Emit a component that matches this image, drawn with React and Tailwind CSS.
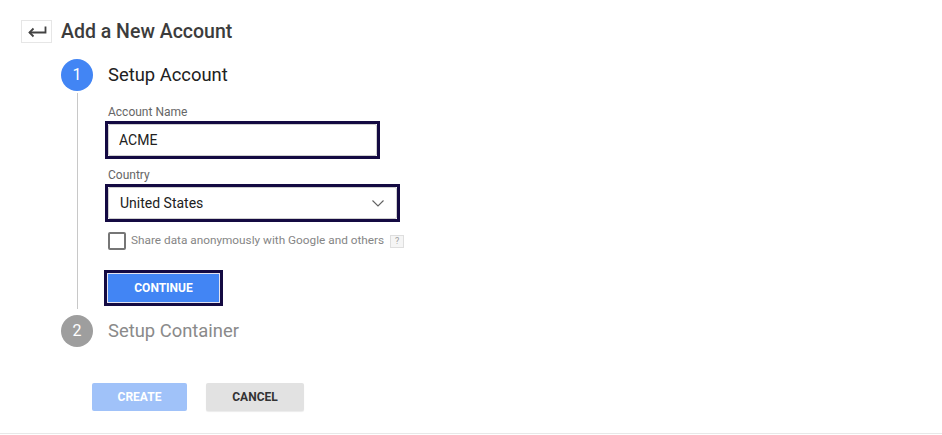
import { useState } from 'react'

function BackArrow() {
  return (
    <svg width="20" height="12" viewBox="0 0 20 12" fill="none" stroke="#424242" strokeWidth="1.8">
      <path d="M18.5 0.5 V6.5 H2.5" />
      <path d="M6.5 2.5 L2.5 6.5 L6.5 10.5" />
    </svg>
  )
}

function Chevron() {
  return (
    <svg width="12" height="7" viewBox="0 0 12 7" fill="none" stroke="#616161" strokeWidth="1.1">
      <path d="M0.5 0.5 L6 6 L11.5 0.5" />
    </svg>
  )
}

function Focus({ className = '', children }) {
  return <div className={`border-[3px] border-[#140a42] ${className}`}>{children}</div>
}

export default function App() {
  const [name, setName] = useState('ACME')
  const [share, setShare] = useState(false)

  return (
    <div
      className="relative h-[435px] w-full overflow-hidden bg-white"
      style={{ fontFamily: 'Roboto, "Liberation Sans", sans-serif' }}
    >
      <div className="px-[21px] pt-[20px]">
        <div className="flex items-center gap-[9px]">
          <button
            type="button"
            className="flex h-[23px] w-[31px] items-center justify-center border border-[#e6e6e6] bg-white"
          >
            <BackArrow />
          </button>
          <h1 className="text-[19.5px] font-medium leading-[23px] text-[#3c3c3c]">Add a New Account</h1>
        </div>

        <div className="mt-[16px] pl-[40px]">
          <div className="flex gap-[15px]">
            <div className="flex w-[32px] flex-col items-center">
              <div className="flex h-[32px] w-[32px] items-center justify-center rounded-full bg-[#4285f4] text-[16px] text-white">
                1
              </div>
              <div className="mb-[6px] mt-[2px] w-px flex-1 bg-[#c8c8c8]" />
            </div>

            <div className="flex flex-col pb-[9px]">
              <div className="flex h-[32px] items-center text-[18.4px] text-[#212121]">Setup Account</div>

              <label className="mt-[13px] text-[12px] leading-[16px] text-[#666]">Account Name</label>
              <Focus className="ml-[-3px] mt-[1px] w-[275px]">
                <input
                  value={name}
                  onChange={(e) => setName(e.target.value)}
                  className="block h-[32px] w-full rounded-[2px] border border-[#cfcfcf] px-[10px] text-[14px] text-[#212121] outline-none"
                />
              </Focus>

              <label className="mt-[8px] text-[12px] leading-[16px] text-[#666]">Country</label>
              <Focus className="ml-[-3px] mt-[1px] w-[295px]">
                <div className="flex h-[32px] items-center justify-between rounded-[2px] border border-[#cfcfcf] pl-[11px] pr-[12px] text-[14px] text-[#212121]">
                  <span>United States</span>
                  <Chevron />
                </div>
              </Focus>

              <label className="mt-[10px] flex items-center gap-[5px]">
                <button
                  type="button"
                  onClick={() => setShare(!share)}
                  className="h-[18px] w-[18px] rounded-[2px] border-2 border-[#767676] bg-white"
                >
                  {share ? <span className="block h-full w-full bg-[#4285f4]" /> : null}
                </button>
                <span className="text-[11.8px] text-[#858585]">Share data anonymously with Google and others</span>
                <span className="ml-[1px] flex h-[13px] w-[14px] items-center justify-center border border-[#dedede] bg-[#f5f5f5] text-[9px] leading-none text-[#9e9e9e]">
                  ?
                </span>
              </label>

              <Focus className="ml-[-4px] mt-[20px] w-[119px]">
                <button
                  type="button"
                  className="block h-[30px] w-full border border-[#e4e4f0] bg-[#4285f4] text-[12px] font-bold text-white"
                >
                  CONTINUE
                </button>
              </Focus>
            </div>
          </div>

          <div className="flex items-center gap-[15px]">
            <div className="flex h-[32px] w-[32px] items-center justify-center rounded-full bg-[#9e9e9e] text-[16px] text-white">
              2
            </div>
            <div className="text-[18.4px] text-[#8a8a8a]">Setup Container</div>
          </div>
        </div>

        <div className="mt-[36px] flex gap-[19px] pl-[71px]">
          <button
            type="button"
            className="h-[28px] w-[95px] rounded-[2px] bg-[#a0c2f9] text-[12px] font-bold text-white"
          >
            CREATE
          </button>
          <button
            type="button"
            className="h-[28px] w-[98px] rounded-[2px] bg-[#e2e2e2] text-[12px] font-bold text-[#333] shadow-[0_1px_1px_rgba(0,0,0,0.08)]"
          >
            CANCEL
          </button>
        </div>
      </div>

      <div className="absolute bottom-[1px] left-0 right-0 h-px bg-[#e8e8e8]" />
    </div>
  )
}
